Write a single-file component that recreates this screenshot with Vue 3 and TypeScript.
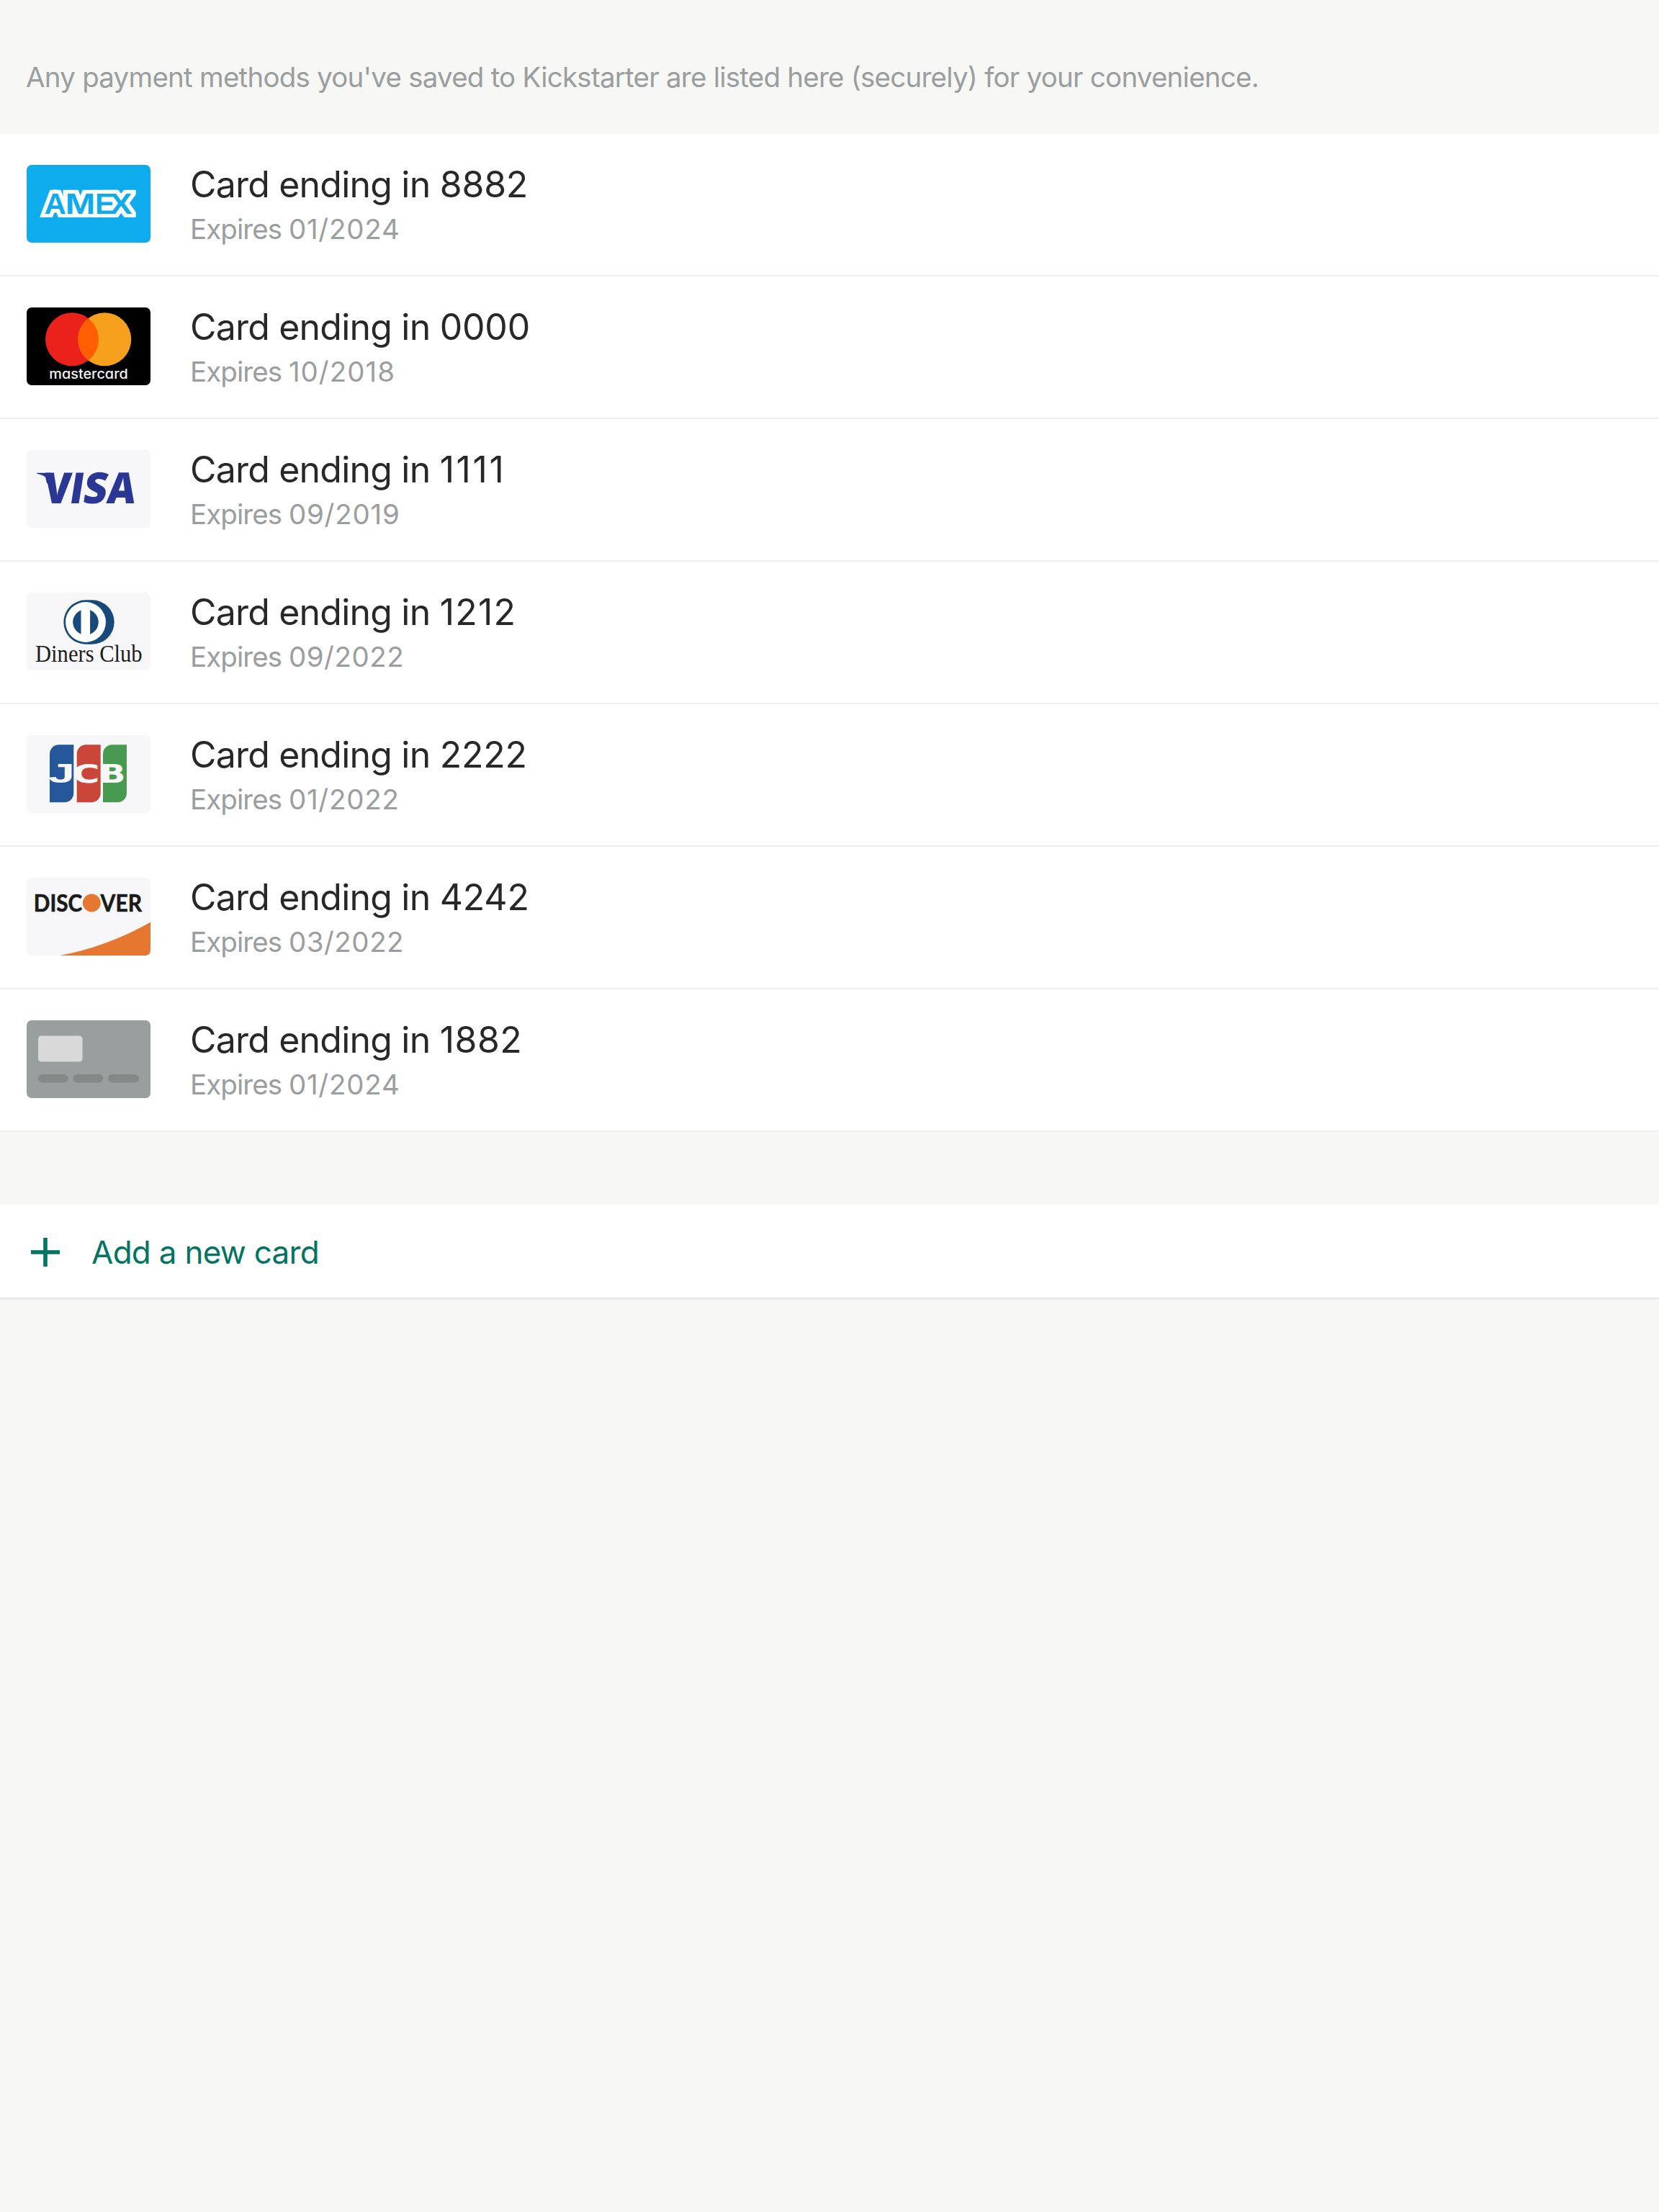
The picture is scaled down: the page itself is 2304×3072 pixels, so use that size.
<script setup lang="ts">
type Brand = 'amex' | 'mastercard' | 'visa' | 'diners' | 'jcb' | 'discover' | 'generic'

interface Card {
  brand: Brand
  lastFour: string
  expires: string
}

const cards: Card[] = [
  { brand: 'amex', lastFour: '8882', expires: '01/2024' },
  { brand: 'mastercard', lastFour: '0000', expires: '10/2018' },
  { brand: 'visa', lastFour: '1111', expires: '09/2019' },
  { brand: 'diners', lastFour: '1212', expires: '09/2022' },
  { brand: 'jcb', lastFour: '2222', expires: '01/2022' },
  { brand: 'discover', lastFour: '4242', expires: '03/2022' },
  { brand: 'generic', lastFour: '1882', expires: '01/2024' },
]

const amexLayers = ['amex-outline', 'amex-fill']

function digitTracking(digits: string, base: number, perOne: number): string {
  return `${base + (digits.split('1').length - 1) * perOne}px`
}
</script>

<template>
  <main class="screen">
    <p class="intro">Any payment methods you've saved to Kickstarter are listed here (securely) for your convenience.</p>

    <ul class="cards">
      <li v-for="card in cards" :key="card.brand" class="row">
        <svg class="logo" :class="card.brand" viewBox="0 0 172 108" aria-hidden="true">
          <g v-if="card.brand === 'amex'">
            <clipPath id="amex-bounds"><rect x="17" y="34.3" width="134.7" height="38.4" /></clipPath>
            <g v-for="layer in amexLayers" :key="layer" :class="layer" clip-path="url(#amex-bounds)">
              <text x="24.6" y="67.5" textLength="30.4" lengthAdjust="spacingAndGlyphs">A</text>
              <text x="53.4" y="67.5" textLength="42" lengthAdjust="spacingAndGlyphs">M</text>
              <text x="95" y="67.5" textLength="27.5" lengthAdjust="spacingAndGlyphs">E</text>
              <text x="115.5" y="67.5" textLength="31" lengthAdjust="spacingAndGlyphs">X</text>
            </g>
          </g>

          <g v-else-if="card.brand === 'mastercard'">
            <circle cx="63" cy="44.3" r="37" fill="#eb221c" />
            <circle cx="108.3" cy="44.3" r="37" fill="#f7a01d" />
            <path d="M85.65 15.05A37 37 0 0 1 85.65 73.55A37 37 0 0 1 85.65 15.05Z" fill="#ff5f00" />
            <text class="mc-name" x="31.3" y="99.3" textLength="109.4" lengthAdjust="spacingAndGlyphs">mastercard</text>
          </g>

          <g v-else-if="card.brand === 'visa'" class="visa-name">
            <path d="M14.2 31.7H32.5Q36.5 31.7 37.2 36L38.5 46L28 46L26 37.6Q22 34.5 14.2 32.8Z" />
            <g transform="translate(0 74.3)">
              <text transform="skewX(-5)" x="22.3" y="0" textLength="38" lengthAdjust="spacingAndGlyphs">V</text>
              <text transform="skewX(-9)" x="57.8" y="0" textLength="19" lengthAdjust="spacingAndGlyphs">I</text>
              <text transform="skewX(-9)" x="76.5" y="0" textLength="33" lengthAdjust="spacingAndGlyphs">S</text>
              <text transform="skewX(-7)" x="110.3" y="0" textLength="39" lengthAdjust="spacingAndGlyphs">A</text>
            </g>
          </g>

          <g v-else-if="card.brand === 'diners'">
            <path d="M82 10.3A30.7 30.7 0 0 0 82 71.7H91A30.7 30.7 0 0 0 91 10.3Z" fill="#174a7a" />
            <circle cx="82" cy="41" r="28" fill="#fff" />
            <circle cx="82" cy="41" r="17.8" fill="#174a7a" />
            <rect x="75.5" y="22" width="12.6" height="38" fill="#fff" />
            <text class="diners-name" transform="translate(12 96) scale(0.9 1)">Diners Club</text>
          </g>

          <g v-else-if="card.brand === 'jcb'">
            <path d="M32 93.3V26A12.7 12.7 0 0 1 44.7 13.3H65.3V80.6A12.7 12.7 0 0 1 52.6 93.3Z" fill="#24589a" />
            <path d="M69.7 93.3V26A12.7 12.7 0 0 1 82.4 13.3H102.7V80.6A12.7 12.7 0 0 1 90 93.3Z" fill="#c94638" />
            <path d="M106 93.3V26A12.7 12.7 0 0 1 118.7 13.3H139V80.6A12.7 12.7 0 0 1 126.3 93.3Z" fill="#479a50" />
            <g class="jcb-name">
              <text class="jcb-j" x="30" y="66" textLength="37" lengthAdjust="spacingAndGlyphs">J</text>
              <text x="63.5" y="66" textLength="38" lengthAdjust="spacingAndGlyphs">C</text>
              <text x="101.6" y="66" textLength="36" lengthAdjust="spacingAndGlyphs">B</text>
            </g>
          </g>

          <g v-else-if="card.brand === 'discover'">
            <g class="discover-name">
              <text x="9.8" y="47" textLength="67.5" lengthAdjust="spacingAndGlyphs">DISC</text>
              <text x="102.6" y="47" textLength="57.5" lengthAdjust="spacingAndGlyphs">VER</text>
            </g>
            <circle cx="90.3" cy="35" r="12.4" fill="#e57731" />
            <path d="M46 108Q111 96 172 61.7V108Z" fill="#e57731" />
          </g>

          <g v-else>
            <rect x="16" y="21.5" width="61.6" height="36" rx="4.5" fill="#d9d9d9" />
            <g fill="#848886">
              <rect x="16" y="75" width="41.5" height="11.5" rx="5.75" />
              <rect x="64.4" y="75" width="41.5" height="11.5" rx="5.75" />
              <rect x="113" y="75" width="43" height="11.5" rx="5.75" />
            </g>
          </g>
        </svg>

        <div class="details">
          <span class="title">Card ending in <span :style="{ letterSpacing: digitTracking(card.lastFour, -0.2, 0.7) }">{{ card.lastFour }}</span></span>
          <span class="expires">Expires <span :style="{ letterSpacing: digitTracking(card.expires, 0.5, 0.25) }">{{ card.expires }}</span></span>
        </div>
      </li>
    </ul>

    <button class="add" type="button">
      <svg class="plus" viewBox="0 0 40 40" aria-hidden="true">
        <path d="M20 0V40M0 20H40" stroke="currentColor" stroke-width="5.6" />
      </svg>
      <span>Add a new card</span>
    </button>
  </main>
</template>

<style>
body {
  margin: 0;
  background: #f7f7f5;
}
</style>

<style scoped>
.screen {
  min-height: 3072px;
  background: #f7f7f5;
  font-family: Inter, "Liberation Sans", sans-serif;
}

.intro {
  box-sizing: border-box;
  height: 186px;
  margin: 0;
  padding: 83px 36px 0;
  color: #9b9e9e;
  font-size: 38.5px;
  line-height: 48px;
  letter-spacing: -0.77px;
  white-space: nowrap;
}

.cards {
  margin: 0;
  padding: 0;
  list-style: none;
}

.row {
  display: flex;
  align-items: center;
  box-sizing: border-box;
  height: 198px;
  padding: 0 0 2px 37px;
  border-bottom: 2px solid #f0f0ef;
  background: #fff;
}

.logo {
  flex: none;
  width: 172px;
  height: 108px;
  border-radius: 7px;
  background: #f7f7f9;
}

.logo.amex { background: #0eacec; }
.logo.mastercard { background: #000; }
.logo.generic { background: #9b9e9e; }

.amex-outline,
.amex-fill {
  font: bold 40.7px "Liberation Sans", sans-serif;
  fill: #0eacec;
}

.amex-outline {
  fill: #fff;
  stroke: #fff;
  stroke-width: 10.4px;
}

.mc-name {
  font: 500 18.5px Inter, sans-serif;
  font-feature-settings: "cv11";
  fill: #f2f2f2;
}

.visa-name {
  font: 800 59.6px "Open Sans", sans-serif;
  fill: #2a3795;
}

.diners-name {
  font: 34px "Liberation Serif", serif;
  fill: #1d1d1b;
}

.jcb-name {
  font: bold 35px "DejaVu Sans", sans-serif;
  fill: #f7f7f9;
}

.jcb-j {
  font: bold 36.5px "Liberation Sans", sans-serif;
}

.discover-name {
  font: 700 33.3px Lato, sans-serif;
  fill: #1a1a1a;
  stroke: #1a1a1a;
  stroke-width: 0.6px;
}

.details {
  display: flex;
  flex-direction: column;
  gap: 8px;
  margin: 2px 0 0 55px;
  white-space: nowrap;
}

.title {
  color: #282828;
  font-size: 50px;
  line-height: 60px;
  letter-spacing: -0.8px;
}

.expires {
  color: #9b9e9e;
  font-size: 38.5px;
  line-height: 48px;
  letter-spacing: -0.95px;
}

.add {
  display: flex;
  align-items: center;
  gap: 44px;
  box-sizing: border-box;
  width: 100%;
  height: 132px;
  margin: 101px 0 0;
  padding: 3px 0 0 43px;
  border: 0;
  border-bottom: 3px solid #e8e8e8;
  background: #fff;
  color: #037362;
  font-family: inherit;
  font-size: 44px;
  line-height: 54px;
  letter-spacing: -0.72px;
}

.plus {
  width: 40px;
  height: 40px;
}
</style>
